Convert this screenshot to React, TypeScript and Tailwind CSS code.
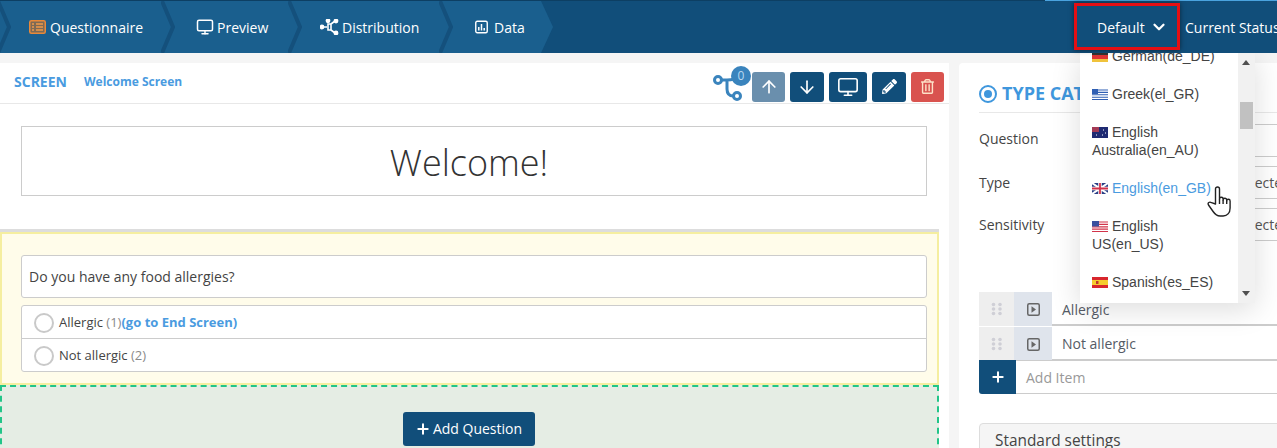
import { ArrowDown, ArrowUp, ChevronDown, Monitor, Plus } from "lucide-react";
import { FaPencilAlt, FaRegTrashAlt } from "react-icons/fa";
import type { ReactNode } from "react";

function Chevron({ className }: { className: string }) {
  return (
    <svg width="14" height="52" viewBox="0 0 14 52" className={className} aria-hidden="true">
      <polyline points="1,0 12,26 1,52" fill="none" stroke="#14507c" strokeWidth="4" />
    </svg>
  );
}

function QuestionnaireIcon() {
  return (
    <svg width="17" height="14" viewBox="0 0 17 14" aria-hidden="true">
      <rect x="0.75" y="0.75" width="15.5" height="12.5" rx="1.5" fill="#7d6a55" stroke="#e8893a" strokeWidth="1.5" />
      <path d="M3 4h2M7 4h7M3 7h2M7 7h7M3 10h2M7 10h7" stroke="#f09a4a" strokeWidth="1.5" />
    </svg>
  );
}

function DistributionIcon() {
  return (
    <svg width="20" height="16" viewBox="0 0 20 16" fill="none" stroke="#fff" strokeWidth="1.6" aria-hidden="true">
      <path d="M3 8h4M11 5l4-3M11 11l4 3M8 5l3 0 0 6-3 0z" />
      <circle cx="2" cy="8" r="1.6" fill="#fff" />
      <circle cx="8" cy="1.8" r="1.6" fill="#fff" />
      <circle cx="16" cy="2" r="1.6" fill="#fff" />
      <circle cx="16" cy="14" r="1.6" fill="#fff" />
    </svg>
  );
}

function DataIcon() {
  return (
    <svg width="13" height="14" viewBox="0 0 13 14" fill="none" aria-hidden="true">
      <rect x="0.75" y="1.25" width="11.5" height="11.5" rx="1.5" stroke="#fff" strokeWidth="1.4" />
      <path d="M3.8 10.5V7M6.5 10.5V4M9.2 10.5V8" stroke="#fff" strokeWidth="1.5" />
    </svg>
  );
}

function BranchIcon() {
  return (
    <svg width="38" height="32" viewBox="0 0 38 32" fill="none" stroke="#3a84bd" strokeWidth="3" aria-hidden="true">
      <circle cx="6" cy="9" r="3.5" />
      <circle cx="25" cy="25" r="3.5" />
      <path d="M9.5 9H15M15 9V18C15 23 17 25 21.5 25M15 9C20 9 24 8 27 5" />
    </svg>
  );
}

function HandCursor() {
  return (
    <svg width="25" height="32" viewBox="0 0 25 32" fill="#fff" stroke="#222" strokeWidth="1.4" strokeLinejoin="round" className="absolute left-[1207px] top-[186px] z-20" aria-hidden="true">
      <path d="M8.5 18V3a2 2 0 0 1 4 0v10a1.8 1.8 0 0 1 3.6 0v1a1.8 1.8 0 0 1 3.6 0v1a1.7 1.7 0 0 1 3.4 0v7c0 5-3 8-7 8h-3c-3 0-5-1.5-7-4.5L1.5 19c-1.2-2 1-3.8 3-2.3z" />
      <path d="M12.5 13v5M16.1 14v4M19.7 15v3" fill="none" />
    </svg>
  );
}

function ToolButton({ className, children }: { className: string; children: ReactNode }) {
  return <div className={`flex h-[30px] items-center justify-center rounded-[3px] text-white ${className}`}>{children}</div>;
}

function Flag({ code }: { code: string }) {
  const art: Record<string, ReactNode> = {
    de: (
      <>
        <rect width="16" height="4" fill="#333" />
        <rect y="4" width="16" height="4" fill="#d33" />
        <rect y="8" width="16" height="3" fill="#f0c33c" />
      </>
    ),
    gr: (
      <>
        <rect width="16" height="11" fill="#fff" />
        <path d="M0 1h16M0 3.4h16M0 5.8h16M0 8.2h16M0 10.5h16" stroke="#2f5fb3" strokeWidth="1.1" />
        <rect width="6" height="5" fill="#2f5fb3" />
      </>
    ),
    au: (
      <>
        <rect width="16" height="11" fill="#1f2a72" />
        <rect width="7" height="5" fill="#a33a55" />
        <path d="M11 3h1M13 6h1M10 8h1M4 8h1" stroke="#fff" strokeWidth="1" />
      </>
    ),
    gb: (
      <>
        <rect width="16" height="11" fill="#2a3f86" />
        <path d="M0 0l16 11M16 0L0 11" stroke="#fff" strokeWidth="2" />
        <path d="M8 0v11M0 5.5h16" stroke="#fff" strokeWidth="3.5" />
        <path d="M8 0v11M0 5.5h16" stroke="#d2334a" strokeWidth="1.8" />
      </>
    ),
    us: (
      <>
        <rect width="16" height="11" fill="#fff" />
        <path d="M0 1h16M0 3.4h16M0 5.8h16M0 8.2h16M0 10.5h16" stroke="#d2334a" strokeWidth="1.2" />
        <rect width="7" height="5.5" fill="#3a4f9e" />
      </>
    ),
    es: (
      <>
        <rect width="16" height="11" fill="#d8262c" />
        <rect y="3" width="16" height="5" fill="#f5cc2e" />
        <rect x="4" y="4" width="2.5" height="3" fill="#c0392b" />
      </>
    ),
  };
  return (
    <svg width="16" height="11" viewBox="0 0 16 11" className="mr-1 inline-block align-[-1px]" aria-hidden="true">
      {art[code]}
    </svg>
  );
}

const languages = [
  { code: "de", label: "German(de_DE)" },
  { code: "gr", label: "Greek(el_GR)" },
  { code: "au", label: "English Australia(en_AU)" },
  { code: "gb", label: "English(en_GB)", active: true },
  { code: "us", label: "English US(en_US)" },
  { code: "es", label: "Spanish(es_ES)" },
];

function Grip() {
  return (
    <svg width="12" height="14" viewBox="0 0 12 14" fill="#cfcfd6" aria-hidden="true">
      <circle cx="2.5" cy="2.5" r="1.8" />
      <circle cx="9" cy="2.5" r="1.8" />
      <circle cx="2.5" cy="7" r="1.8" />
      <circle cx="9" cy="7" r="1.8" />
      <circle cx="2.5" cy="11.5" r="1.8" />
      <circle cx="9" cy="11.5" r="1.8" />
    </svg>
  );
}

function PlayBox() {
  return (
    <svg width="13" height="13" viewBox="0 0 13 13" fill="none" aria-hidden="true">
      <rect x="0.75" y="0.75" width="11.5" height="11.5" rx="1.5" stroke="#666" strokeWidth="1.5" />
      <path d="M4.5 3.2L9 6.5L4.5 9.8z" fill="#666" />
    </svg>
  );
}

function ItemRow({ label, textClass }: { label: string; textClass: string }) {
  return (
    <div className="mb-[1px] flex h-[34px]">
      <div className="flex w-[35px] items-center justify-center bg-[#eeeeee]">
        <Grip />
      </div>
      <div className="flex w-[38px] items-center justify-center bg-[#dfe4ec]">
        <PlayBox />
      </div>
      <div className={`flex flex-1 items-center border-b-2 border-[#cccccc] bg-white pl-[10px] text-[14px] text-[#555b66] ${textClass}`}>{label}</div>
    </div>
  );
}

function FieldRow({ label, value, labelClass = "" }: { label: string; value?: string; labelClass?: string }) {
  return (
    <div className="mb-[9px] flex h-[33px] items-center text-[14px] text-[#444444]">
      <div className={`w-[101px] ${labelClass}`}>{label}</div>
      <div className="flex h-full flex-1 items-center border-y border-[#cccccc] pl-[129px] whitespace-nowrap text-[#555555]">{value}</div>
    </div>
  );
}

export default function App() {
  return (
    <div className="relative h-[448px] w-[1277px] overflow-hidden bg-[#f5f5f5] font-['Open_Sans',sans-serif]">
      {/* Top bar */}
      <header className="relative z-10 bg-[#114e7a] text-[14px] text-white">
        <div className="flex h-px">
          <div className="w-[1045px] bg-[#0d3f63]" />
          <div className="flex-1 bg-[#4aa3df]" />
        </div>
        <div className="flex h-[52px]">
          <nav className="relative flex w-[553px] shrink-0 bg-[#1a5f8e] [clip-path:polygon(0_0,541px_0,553px_50%,541px_100%,0_100%)]">
            <Chevron className="absolute left-[-3px] top-0" />
            <div className="relative flex w-[175px] items-center gap-[4px] pl-[29px]">
              <QuestionnaireIcon />
              Questionnaire
              <Chevron className="absolute right-0 top-0" />
            </div>
            <div className="relative flex w-[127px] items-center gap-[3px] pl-[21px]">
              <Monitor size={18} strokeWidth={2} />
              Preview
              <Chevron className="absolute right-0 top-0" />
            </div>
            <div className="relative flex w-[151px] items-center gap-[2px] pl-[18px]">
              <DistributionIcon />
              Distribution
              <Chevron className="absolute right-0 top-0" />
            </div>
            <div className="flex items-center gap-[6px] pl-[22px]">
              <DataIcon />
              Data
            </div>
          </nav>
          <div className="ml-[521px] mt-[2px] flex h-[47px] w-[106px] shrink-0 items-center gap-[5px] border-[3px] border-[#e60f14] pl-[20px] pt-[1px] shadow-[0_0_5px_rgba(0,0,0,0.5)]">
            Default
            <ChevronDown size={18} strokeWidth={3} />
          </div>
          <div className="ml-[5px] flex items-center whitespace-nowrap">Current Status</div>
        </div>
      </header>

      <main className="flex gap-[10px] pt-[10px]">
        {/* Screen editor */}
        <section className="w-[949px] shrink-0 bg-white">
          <div className="flex h-[41px] items-center border-b border-[#e8e8e8] pl-[14px] pr-[5px]">
            <span className="mt-[-3px] text-[14px] font-bold text-[#4a9be0]">SCREEN</span>
            <span className="ml-[17px] mt-[-3px] text-[12px] font-bold text-[#4a9be0]">Welcome Screen</span>
            <div className="relative ml-auto mt-[7px] flex items-center gap-[5px]">
              <div className="relative mr-[-3px] h-[32px] w-[38px]">
                <BranchIcon />
                <span className="absolute right-[-1px] top-[-5px] flex h-[20px] w-[20px] items-center justify-center rounded-full bg-[#3a84bd] text-[12px] text-[#b8d8f0]">0</span>
              </div>
              <ToolButton className="w-[33px] bg-[#6a8fad]">
                <ArrowUp size={20} />
              </ToolButton>
              <ToolButton className="w-[34px] bg-[#114e7a]">
                <ArrowDown size={20} />
              </ToolButton>
              <ToolButton className="w-[38px] bg-[#114e7a]">
                <Monitor size={22} strokeWidth={1.75} />
              </ToolButton>
              <ToolButton className="w-[34px] bg-[#114e7a]">
                <FaPencilAlt size={15} />
              </ToolButton>
              <ToolButton className="w-[33px] bg-[#d9534f]">
                <FaRegTrashAlt size={15} className="text-[#fde2c8]" />
              </ToolButton>
            </div>
          </div>

          <div className="ml-[21px] mt-[22px] flex h-[70px] w-[906px] items-center justify-center border border-[#cccccc] pr-[10px] pt-[3px] text-[36px] font-light text-[#333333]">
            Welcome!
          </div>

          <div className="mt-[33px] h-[3px] w-[939px] bg-[#dddddd]" />

          <div className="h-[153px] w-[939px] border-2 border-[#f5eea0] bg-[#fffcea] pl-[19px] pt-[21px]">
            <div className="flex h-[43px] w-[906px] items-center rounded-[3px] border border-[#cccccc] bg-white pl-[7px] text-[14px] text-[#444444]">
              Do you have any food allergies?
            </div>
            <div className="mt-[7px] w-[906px] rounded-[3px] border border-[#cccccc] bg-white text-[13px] text-[#444444]">
              <div className="flex h-[33px] items-center border-b border-[#cccccc] pl-[12px] pt-[1px]">
                <span className="mr-[5px] h-[20px] w-[20px] rounded-full border-2 border-[#c9c9c9] bg-white" />
                Allergic&nbsp;<span className="text-[#8a8a8a]">(1)</span>
                <span className="font-bold text-[#4a9be0]">(go to End Screen)</span>
              </div>
              <div className="flex h-[32px] items-center pl-[12px] pt-[1px]">
                <span className="mr-[5px] h-[20px] w-[20px] rounded-full border-2 border-[#c9c9c9] bg-white" />
                Not allergic&nbsp;<span className="text-[#8a8a8a]">(2)</span>
              </div>
            </div>
          </div>

          <div className="flex h-[70px] w-[939px] justify-center border-2 border-dashed border-[#22c588] bg-[#e5ede4] pr-[2px] pt-[25px]">
            <div className="flex h-[34px] w-[132px] items-center justify-center gap-[2px] rounded-[3px] bg-[#114e7a] pb-[2px] text-[14px] text-white">
              <Plus size={16} strokeWidth={3} className="mt-[2px]" />
              Add Question
            </div>
          </div>
        </section>

        {/* Question settings */}
        <aside className="flex-1 rounded-tl-[4px] bg-white pl-[20px]">
          <div className="flex h-[50px] items-center gap-[5px] overflow-hidden whitespace-nowrap border-b border-[#e8e8e8] pt-[12px] text-[18px] font-bold text-[#3f97dd]">
            <svg width="18" height="18" viewBox="0 0 18 18" fill="none" aria-hidden="true">
              <circle cx="9" cy="9" r="8" stroke="#3f97dd" strokeWidth="2" />
              <circle cx="9" cy="9" r="4" fill="#3f97dd" />
            </svg>
            TYPE CAT
          </div>
          <div className="mt-[11px]">
            <FieldRow label="Question" labelClass="mt-[-4px]" />
            <FieldRow label="Type" value="Not selected" />
            <FieldRow label="Sensitivity" value="Not selected" />
          </div>
          <div className="mt-[51px]">
            <ItemRow label="Allergic" textClass="pt-[2px]" />
            <ItemRow label="Not allergic" textClass="" />
            <div className="relative mt-[-2px] flex h-[34px]">
              <div className="flex w-[37px] items-center justify-center rounded-bl-[3px] bg-[#114e7a] text-white">
                <Plus size={16} strokeWidth={3} />
              </div>
              <div className="flex flex-1 items-center border-y border-[#cccccc] bg-white pl-[10px] text-[14px] text-[#999999]">Add Item</div>
            </div>
          </div>
          <div className="mt-[29px] h-[40px] rounded-t-[4px] border border-[#dddddd] bg-[#f5f5f5] pl-[15px] pt-[5px] text-[15.4px] text-[#444444]">
            Standard settings
          </div>
        </aside>
      </main>

      {/* Language dropdown, open over the page */}
      <div className="absolute left-[1080px] top-[53px] z-[5] flex h-[250px] w-[175px] overflow-hidden bg-white font-['Liberation_Sans',sans-serif] text-[14px] leading-[18px] text-[#444444] shadow-[0_6px_28px_rgba(0,0,0,0.14)]">
        <ul className="mt-[-16px] w-[158px] shrink-0">
          {languages.map((lang) => (
            <li key={lang.code} className={`px-[12px] py-[10px] ${lang.active ? "text-[#4a9be0]" : ""}`}>
              <Flag code={lang.code} />
              {lang.label}
            </li>
          ))}
        </ul>
        <div className="relative flex-1 bg-[#f1f1f1]">
          <span className="absolute left-[4px] top-[7px] h-0 w-0 border-x-[4px] border-b-[5px] border-x-transparent border-b-[#505050]" />
          <span className="absolute left-[2px] top-[49px] h-[27px] w-[13px] bg-[#c1c1c1]" />
          <span className="absolute bottom-[7px] left-[4px] h-0 w-0 border-x-[4px] border-t-[5px] border-x-transparent border-t-[#505050]" />
        </div>
      </div>

      {/* Mouse pointer */}
      <HandCursor />
    </div>
  );
}
